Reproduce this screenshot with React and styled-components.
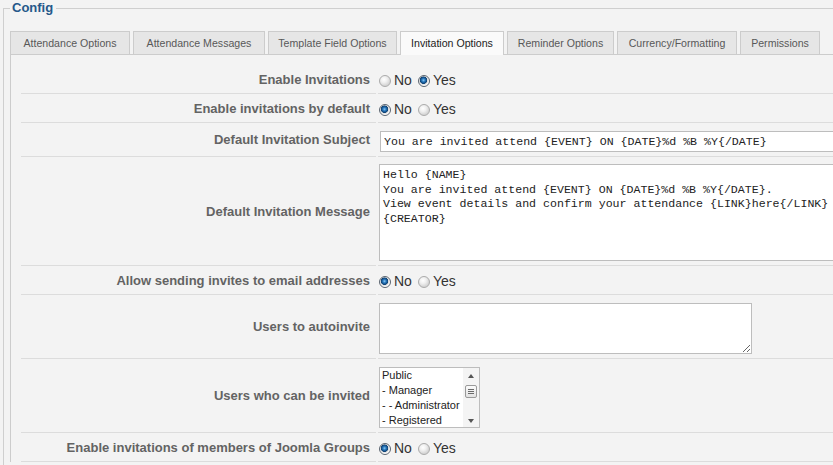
import styled, { createGlobalStyle } from "styled-components";

const GlobalStyle = createGlobalStyle`
  html, body {
    margin: 0;
    padding: 0;
    background: #f3f3f3;
    overflow: hidden;
  }
  body {
    font-family: "Liberation Sans", Arial, sans-serif;
  }
`;

const tabs = [
    { label: "Attendance Options", width: 120 },
    { label: "Attendance Messages", width: 132 },
    { label: "Template Field Options", width: 129 },
    { label: "Invitation Options", width: 104, active: true },
    { label: "Reminder Options", width: 107 },
    { label: "Currency/Formatting", width: 120 },
    { label: "Permissions", width: 80 },
];

const groups = ["Public", "- Manager", "- - Administrator", "- Registered"];

const message = `Hello {NAME}
You are invited attend {EVENT} ON {DATE}%d %B %Y{/DATE}.
View event details and confirm your attendance {LINK}here{/LINK}
{CREATOR}`;

const YesNo = ({ value }) => (
    <RadioGroup>
        <RadioOption>
            <RadioDot $checked={value === "no"} />
            No
        </RadioOption>
        <RadioOption>
            <RadioDot $checked={value === "yes"} />
            Yes
        </RadioOption>
    </RadioGroup>
);

const App = () => {
    return (
        <Page>
            <GlobalStyle />
            <Fieldset>
                <Legend>Config</Legend>
                <TabBar>
                    {tabs.map((t) => (
                        <Tab key={t.label} $active={t.active} $width={t.width}>
                            {t.label}
                        </Tab>
                    ))}
                </TabBar>
                <Panel>
                    <FormGrid>
                        <Label>Enable Invitations</Label>
                        <Value>
                            <YesNo value="yes" />
                        </Value>

                        <Label>Enable invitations by default</Label>
                        <Value>
                            <YesNo value="no" />
                        </Value>

                        <Label>Default Invitation Subject</Label>
                        <Value $field>
                            <TextInput
                                type="text"
                                defaultValue="You are invited attend {EVENT} ON {DATE}%d %B %Y{/DATE}"
                            />
                        </Value>

                        <Label>Default Invitation Message</Label>
                        <Value $field $top={7}>
                            <TextBox $width={540} $height={97} defaultValue={message} />
                        </Value>

                        <Label>Allow sending invites to email addresses</Label>
                        <Value>
                            <YesNo value="no" />
                        </Value>

                        <Label>Users to autoinvite</Label>
                        <Value $field>
                            <TextBox $width={373} $height={51} defaultValue="" />
                        </Value>

                        <Label>Users who can be invited</Label>
                        <Value $field>
                            <ListBox>
                                <ListItems>
                                    {groups.map((g) => (
                                        <li key={g}>{g}</li>
                                    ))}
                                </ListItems>
                                <Scrollbar>
                                    <ScrollArrow $dir="up" />
                                    <Thumb />
                                    <ScrollArrow $dir="down" />
                                </Scrollbar>
                            </ListBox>
                        </Value>

                        <Label>Enable invitations of members of Joomla Groups</Label>
                        <Value>
                            <YesNo value="no" />
                        </Value>
                    </FormGrid>
                </Panel>
            </Fieldset>
        </Page>
    );
};

const Page = styled.div`
    width: 960px;
    padding-left: 3px;
`;

const Fieldset = styled.fieldset`
    margin: 0;
    padding: 0 0 30px 6px;
    border: 1px solid #cfcfcf;
    min-width: 0;
`;

const Legend = styled.legend`
    padding: 0 3px 0 2px;
    font: bold 13px/16px "Liberation Sans", Arial, sans-serif;
    color: #25588a;
`;

const TabBar = styled.div`
    margin-top: 15px;
    height: 23px;
    display: flex;
    align-items: flex-end;
    gap: 3px;
    position: relative;
    z-index: 1;
`;

const Tab = styled.div`
    width: ${(p) => p.$width}px;
    box-sizing: border-box;
    height: ${(p) => (p.$active ? "24px" : "23px")};
    margin-bottom: ${(p) => (p.$active ? "-1px" : "0")};
    border: 1px solid #cccccc;
    border-bottom: none;
    background: ${(p) => (p.$active ? "#fafafa" : "#e6e6e6")};
    color: ${(p) => (p.$active ? "#222" : "#585858")};
    font-size: 10.6px;
    line-height: 22px;
    text-align: center;
    white-space: nowrap;
    overflow: hidden;
`;

const Panel = styled.div`
    border-top: 1px solid #cccccc;
    border-left: 1px solid #cccccc;
    padding: 10px 0 0 10px;
`;

const FormGrid = styled.div`
    display: grid;
    grid-template-columns: 355px 1fr;
    column-gap: 2px;
`;

const Label = styled.div`
    display: flex;
    align-items: center;
    justify-content: flex-end;
    padding-right: 6px;
    border-bottom: 1px solid #dcdcdc;
    font-size: 13px;
    font-weight: bold;
    color: #636363;
    text-align: right;
`;

const Value = styled.div`
    display: flex;
    align-items: ${(p) => (p.$field ? "flex-start" : "center")};
    min-height: 29px;
    box-sizing: border-box;
    padding: ${(p) => (p.$field ? `${p.$top ?? 8}px 0 4px 1px` : "3px 0 0 1px")};
    border-bottom: 1px solid #dcdcdc;
`;

const RadioGroup = styled.div`
    display: flex;
    align-items: center;
    gap: 6px;
`;

const RadioOption = styled.label`
    display: inline-flex;
    align-items: center;
    gap: 3px;
    font-size: 14px;
    line-height: 17px;
    color: #333;
`;

const RadioDot = styled.span`
    width: 12px;
    height: 12px;
    box-sizing: border-box;
    border-radius: 50%;
    flex-shrink: 0;
    border: 1px solid ${(p) => (p.$checked ? "#5b6570" : "#ababab")};
    background: ${(p) =>
        p.$checked
            ? "radial-gradient(circle at 45% 42%, #8ccaf4 0, #2a7bc0 1.6px, #0c3f72 3.4px, #dcdcdc 4px, #ffffff 5.5px)"
            : "radial-gradient(circle at 40% 35%, #ffffff 0, #f0f0f0 3px, #d6d6d6 6px)"};
`;

const TextInput = styled.input`
    width: 540px;
    height: 21px;
    box-sizing: border-box;
    margin: 0 0 0 1px;
    padding: 0 3px;
    border: 1px solid #bdbdbd;
    background: #fff;
    color: #222;
    font: 11.6px "Liberation Mono", "Courier New", monospace;
    outline: none;
`;

const TextBox = styled.textarea`
    display: block;
    width: ${(p) => p.$width}px;
    height: ${(p) => p.$height}px;
    box-sizing: border-box;
    margin: 0;
    padding: 3px;
    border: 1px solid #bdbdbd;
    background: #fff;
    color: #222;
    font: 11.6px/14.7px "Liberation Mono", "Courier New", monospace;
    outline: none;
    overflow: hidden;
`;

const ListBox = styled.div`
    width: 101px;
    height: 61px;
    box-sizing: border-box;
    display: flex;
    border: 1px solid #bdbdbd;
    background: #fff;
`;

const ListItems = styled.ul`
    flex: 1;
    margin: 0;
    padding: 0 0 0 2px;
    list-style: none;
    overflow: hidden;
    font-size: 11px;
    line-height: 15px;
    color: #222;
    white-space: nowrap;
`;

const Scrollbar = styled.div`
    width: 16px;
    display: flex;
    flex-direction: column;
    align-items: center;
    background: #f4f4f4;
`;

const ScrollArrow = styled.div`
    height: 16px;
    width: 16px;
    display: flex;
    align-items: center;
    justify-content: center;

    &::after {
        content: "";
        width: 0;
        height: 0;
        border-left: 3.5px solid transparent;
        border-right: 3.5px solid transparent;
        ${(p) =>
            p.$dir === "up"
                ? "border-bottom: 4px solid #555;"
                : "border-top: 4px solid #555; margin-top: 4px;"}
    }
`;

const Thumb = styled.div`
    width: 12px;
    height: 13px;
    box-sizing: border-box;
    margin-top: 1px;
    margin-bottom: auto;
    border: 1px solid #9a9a9a;
    border-radius: 2px;
    background: linear-gradient(#fbfbfb, #e2e2e2);
    display: flex;
    align-items: center;
    justify-content: center;

    &::after {
        content: "";
        width: 6px;
        height: 5px;
        background: repeating-linear-gradient(
            to bottom,
            #6a6a6a 0 1px,
            transparent 1px 2px
        );
    }
`;

export default App;
